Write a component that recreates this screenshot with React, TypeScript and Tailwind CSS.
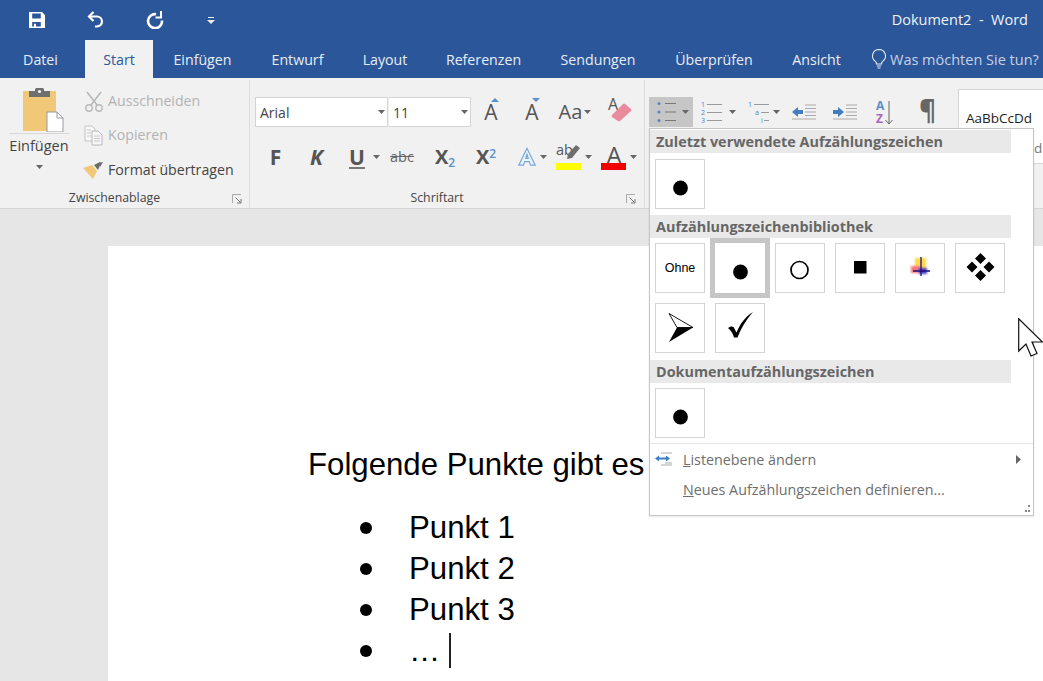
import React from "react";

const ui = "font-['Open_Sans','Noto_Sans',sans-serif]";

function Caret({ className = "" }: { className?: string }) {
  return (
    <svg width="7" height="4" viewBox="0 0 7 4" className={"shrink-0 " + className}>
      <path d="M0 0h7L3.5 4z" fill="#666" />
    </svg>
  );
}

function Launcher() {
  return (
    <svg width="10" height="10" viewBox="0 0 10 10">
      <path d="M.5 9V.5H9" fill="none" stroke="#aaa" />
      <path d="M3.5 3.5l5 5M9 5v4H5" fill="none" stroke="#777" />
    </svg>
  );
}

function Tile({ children, selected = false }: { children?: React.ReactNode; selected?: boolean }) {
  return (
    <div
      className={
        "w-[50px] h-[50px] bg-white flex items-center justify-center " +
        (selected ? "ring-[5px] ring-[#c6c6c6]" : "border border-[#d4d4d4]")
      }
    >
      {children}
    </div>
  );
}

function TileSvg({ children }: { children: React.ReactNode }) {
  return (
    <svg width="50" height="50" viewBox="0 0 50 50" className="shrink-0">
      {children}
    </svg>
  );
}

function MenuHeader({ children }: { children: React.ReactNode }) {
  return (
    <div className="w-[361px] h-[23px] bg-[#e9e9e9] pl-[6px] text-[#666] font-bold text-[14.4px] leading-[23px] whitespace-nowrap">
      {children}
    </div>
  );
}

function Dot() {
  return (
    <TileSvg>
      <circle cx="25.5" cy="29" r="7.4" fill="#000" />
    </TileSvg>
  );
}

function Tab({ label, w, ml = 0, active = false }: { label: string; w: number; ml?: number; active?: boolean }) {
  return (
    <div
      style={{ width: w, marginLeft: ml }}
      className={
        "h-full flex items-center justify-center text-[14.2px] shrink-0 pt-[1px] " +
        (active ? "bg-[#f1f1f1] text-[#2b579a]" : "text-[#e8edf5]")
      }
    >
      {label}
    </div>
  );
}

export default function App() {
  return (
    <div className={"relative w-[1043px] h-[681px] overflow-hidden bg-[#e6e6e6] " + ui}>
      {/* Title bar */}
      <div className="h-10 bg-[#2b579a] flex items-center text-white pl-[29px] pr-[15px]">
        <svg width="16" height="16" viewBox="0 0 16 16" className="mr-[42px]">
          <path
            fillRule="evenodd"
            d="M0 0h13l3 3v13H0zM3.2 1.5v5h8.6v-5zM3.2 10v4.6h1.8V11.8h2V14.6h4.8V10z"
            fill="#fff"
          />
        </svg>
        <svg width="18" height="18" viewBox="0 0 18 18" className="mr-[41px]">
          <path d="M2.5 5.5H10a5 5 0 0 1 0 10H8" fill="none" stroke="#fff" strokeWidth="2.2" />
          <path d="M6.5 1L2 5.5 6.5 10" fill="none" stroke="#fff" strokeWidth="2.2" />
        </svg>
        <svg width="18" height="18" viewBox="0 0 18 18" className="mr-[43px]">
          <path d="M10 3.2A7 7 0 1 0 16 9.5" fill="none" stroke="#fff" strokeWidth="2.6" />
          <path d="M15 0V6.5H9.5" fill="none" stroke="#fff" strokeWidth="2" />
        </svg>
        <svg width="8" height="7" viewBox="0 0 8 7">
          <path d="M1 0h6v1H1zM0 3h8L4 7z" fill="#e8edf5" />
        </svg>
        <div className="ml-auto text-[14.5px] text-[#f0f3f8] whitespace-pre">Dokument2  -  Word</div>
      </div>

      {/* Tabs */}
      <div className="h-[38px] bg-[#2b579a] flex items-center overflow-hidden">
        <Tab label="Datei" w={81} />
        <Tab label="Start" w={68} ml={4} active />
        <Tab label="Einfügen" w={99} />
        <Tab label="Entwurf" w={91} />
        <Tab label="Layout" w={84} />
        <Tab label="Referenzen" w={113} />
        <Tab label="Sendungen" w={116} />
        <Tab label="Überprüfen" w={116} />
        <Tab label="Ansicht" w={89} />
        <div className="flex items-center ml-[9px] shrink-0 text-[#c6d1e4] text-[14.5px] whitespace-nowrap mt-[2px]">
          <svg width="18" height="22" viewBox="0 0 18 22" className="mr-[2px] mt-[-3px] shrink-0">
            <path
              d="M9 1.5a6.5 6.5 0 0 0-3.6 11.9c.8.7 1.1 1.6 1.1 2.6h5c0-1 .3-1.9 1.1-2.6A6.5 6.5 0 0 0 9 1.5zM6.8 18h4.4M7.6 20h2.8"
              fill="none"
              stroke="#e8edf5"
              strokeWidth="1.1"
            />
          </svg>
          Was möchten Sie tun?
        </div>
      </div>

      {/* Ribbon */}
      <div className="h-[131px] bg-[#f1f1f1] border-b border-[#d6d6d6] flex text-[#444] overflow-hidden">
        {/* Zwischenablage */}
        <div className="w-[250px] shrink-0 flex flex-col pt-[2px] pb-[2px]">
          <div className="flex-1 border-r border-[#dcdcdc] flex flex-col">
            <div className="flex h-[108px]">
              <div className="w-[68px] ml-[5px] flex flex-col items-center pt-[8px] shrink-0">
                <svg width="42" height="44" viewBox="0 0 42 44" className="ml-[7px] shrink-0">
                  <path d="M1 3h33v40H1z" fill="#f0c878" />
                  <path d="M7 3h6V1.5C13 .5 14 0 15 0h5c1 0 2 .5 2 1.5V3h6v6H7z" fill="#6f6f6f" />
                  <circle cx="17.5" cy="3.5" r="1.6" fill="#f1f1f1" />
                  <path d="M25 24h10l6 6v14H25z" fill="#fff" stroke="#9a9a9a" />
                  <path d="M35 24v6h6" fill="none" stroke="#9a9a9a" />
                </svg>
                <div className="w-[60px] border-t border-[#d8d8d8] mt-[1px]" />
                <div className="text-[14.5px] leading-[20px] mt-[2px]">Einfügen</div>
                <Caret className="mt-[9px]" />
              </div>
              <div className="flex flex-col text-[14.2px] ml-[11px] w-[165px] shrink-0 pt-[4px]">
                <div className="h-[34px] flex items-center text-[#b3b3b3]">
                  <svg width="20" height="21" viewBox="0 0 20 21" className="mr-[4px] shrink-0">
                    <path d="M3 1l10 13M17 1L7 14" stroke="#b8b8b8" strokeWidth="1.6" fill="none" />
                    <circle cx="5" cy="17" r="3.2" fill="none" stroke="#b8b8b8" strokeWidth="1.4" />
                    <circle cx="15" cy="17" r="3.2" fill="none" stroke="#b8b8b8" strokeWidth="1.4" />
                  </svg>
                  Ausschneiden
                </div>
                <div className="h-[34px] flex items-center text-[#b3b3b3]">
                  <svg width="20" height="21" viewBox="0 0 20 21" className="mr-[4px] shrink-0">
                    <path d="M1 1h7l3 3v12H1z" fill="#f7f7f7" stroke="#c4c4c4" />
                    <path d="M8 6h6l4 4v10H8z" fill="#f7f7f7" stroke="#b8b8b8" />
                    <path d="M3 5h4M3 8h4M3 11h4M10 11h6M10 13.5h6M10 16h6" stroke="#c8c8c8" />
                  </svg>
                  Kopieren
                </div>
                <div className="h-[34px] flex items-center mt-[1px]">
                  <svg width="21" height="17" viewBox="0 0 21 17" className="mr-[4px] -ml-[1px] shrink-0">
                    <path d="M0 6l9-3 5 6-4 8z" fill="#f0c878" />
                    <path d="M11 3l6-3 1 1-3 7z" fill="#6a6a6a" />
                    <path d="M16 1l4-1-3 5z" fill="#6a6a6a" />
                  </svg>
                  Format übertragen
                </div>
              </div>
            </div>
            <div className="relative h-[20px] flex items-center justify-center text-[12.3px] mr-[20px]">
              Zwischenablage
              <div className="absolute right-[-13px] top-[6px]">
                <Launcher />
              </div>
            </div>
          </div>
        </div>

        {/* Schriftart */}
        <div className="w-[395px] shrink-0 flex flex-col pt-[2px] pb-[2px]">
          <div className="flex-1 border-r border-[#dcdcdc] flex flex-col">
            <div className="h-[108px] flex flex-col pl-[5px] pt-[17px]">
              <div className="flex items-center h-[30px]">
                <div className="w-[133px] h-[30px] bg-white border border-[#d4d4d4] flex items-center justify-between pl-[4px] pr-[2px] text-[14px]">
                  <span>Arial</span>
                  <Caret />
                </div>
                <div className="w-[82px] h-[30px] bg-white border border-[#d4d4d4] border-l-0 flex items-center justify-between pl-[4px] pr-[2px] text-[14px] ml-[1px]">
                  <span>11</span>
                  <Caret />
                </div>
                <div className="w-[40px] text-[21px] leading-none flex justify-center relative text-[#555]">
                  A
                  <svg width="8" height="4" viewBox="0 0 8 4" className="absolute left-[20px] top-[-4px]">
                    <path d="M0 4h8L4 0z" fill="#5b8fc7" />
                  </svg>
                </div>
                <div className="w-[42px] text-[21px] leading-none flex justify-center relative text-[#555]">
                  A
                  <svg width="8" height="4" viewBox="0 0 8 4" className="absolute left-[21px] top-[-4px]">
                    <path d="M0 0h8L4 4z" fill="#5b8fc7" />
                  </svg>
                </div>
                <div className="w-[44px] text-[20px] leading-none flex items-center justify-center text-[#555]">
                  Aa
                  <Caret className="ml-[2px]" />
                </div>
                <div className="relative w-[24px] h-[26px] ml-[11px] mt-[-6px] shrink-0">
                  <span className="absolute left-0 top-[-2px] text-[16px] leading-[20px] text-[#555]">A</span>
                  <svg width="24" height="26" viewBox="0 0 24 26" className="absolute left-0 top-0">
                    <path d="M4 19L15 8a1.5 1.5 0 0 1 2 0l6 5a1.5 1.5 0 0 1 0 2L12 25a1.5 1.5 0 0 1-2 0l-6-4a1.5 1.5 0 0 1 0-2z" fill="#e98b9c" />
                  </svg>
                </div>
              </div>
              <div className="flex items-center h-[30px] mt-[15px] text-[#555]">
                <div className="w-[41px] flex justify-center font-bold text-[21px] leading-none">F</div>
                <div className="w-[41px] flex justify-center font-bold italic text-[21px] leading-none">K</div>
                <div className="w-[30px] flex justify-center font-bold text-[21px] leading-none underline underline-offset-2 decoration-[#777] ml-[5px]">U</div>
                <Caret className="ml-[1px]" />
                <div className="w-[46px] text-center text-[14.5px] line-through leading-none -ml-[1px] text-[#666]">abc</div>
                <div className="w-[36px] text-center font-bold text-[20px] leading-none ml-[2px] whitespace-nowrap">
                  X<sub className="text-[#5b8fc7] text-[12px] font-semibold">2</sub>
                </div>
                <div className="w-[36px] text-center font-bold text-[20px] leading-none ml-[5px] whitespace-nowrap">
                  X<sup className="text-[#5b8fc7] text-[12px] font-semibold">2</sup>
                </div>
                <svg width="20" height="22" viewBox="0 0 22 22" className="ml-[13px] shrink-0">
                  <path d="M11 1.5L2 20h5l1.5-4h5l1.5 4h5zM9.6 12.5L11 8l1.4 4.5z" fill="#eaf2fb" stroke="#7aa7d7" strokeWidth="1.3" />
                </svg>
                <Caret className="ml-[3px]" />
                <div className="relative w-[26px] h-[24px] ml-[9px] shrink-0">
                  <span className="absolute left-0 top-[-2px] text-[14.5px] leading-none text-[#555]">ab</span>
                  <svg width="16" height="16" viewBox="0 0 16 16" className="absolute left-[8px] top-[0px]">
                    <path d="M12 0l4 3-8 10-5 1 1-5z" fill="#6e6e6e" />
                  </svg>
                  <div className="absolute left-0 bottom-[-1px] w-[25px] h-[7px] bg-[#ffff00]" />
                </div>
                <Caret className="ml-[3px]" />
                <div className="relative w-[26px] h-[24px] ml-[9px] flex justify-center shrink-0">
                  <span className="text-[24px] leading-[19px] text-[#555]">A</span>
                  <div className="absolute left-0 bottom-[-1px] w-[25px] h-[7px] bg-[#f00000]" />
                </div>
                <Caret className="ml-[3px]" />
              </div>
            </div>
            <div className="relative h-[20px] flex items-center justify-center text-[12.3px] mr-[20px]">
              Schriftart
              <div className="absolute right-[-12px] top-[6px]">
                <Launcher />
              </div>
            </div>
          </div>
        </div>

        {/* Absatz */}
        <div className="flex-1 flex items-start min-w-0">
          <div className="w-[313px] shrink-0 pl-[4px] pt-[19px]">
            <div className="flex items-center h-[30px]">
              <div className="w-[44px] h-[30px] bg-[#c6c6c6] flex items-center pl-[8px] shrink-0">
                <svg width="20" height="24" viewBox="0 0 20 24" className="shrink-0">
                  <circle cx="2" cy="3.5" r="1.5" fill="#4a86c5" />
                  <circle cx="2" cy="12" r="1.5" fill="#4a86c5" />
                  <circle cx="2" cy="20.5" r="1.5" fill="#4a86c5" />
                  <path d="M8 3.5h11M8 12h11M8 20.5h11" stroke="#777" fill="none" />
                </svg>
                <Caret className="ml-[5px]" />
              </div>
              <div className="flex items-center ml-[8px] shrink-0">
                <svg width="22" height="24" viewBox="0 0 22 24" className="shrink-0">
                  <text x="0" y="7" fontSize="7" fill="#4a86c5" fontFamily="Open Sans">1</text>
                  <text x="0" y="15" fontSize="7" fill="#4a86c5" fontFamily="Open Sans">2</text>
                  <text x="0" y="23" fontSize="7" fill="#4a86c5" fontFamily="Open Sans">3</text>
                  <path d="M6 4.5h15M6 12.5h15M6 20.5h15" stroke="#999" fill="none" />
                </svg>
                <Caret className="ml-[6px]" />
              </div>
              <div className="flex items-center ml-[12px] shrink-0">
                <svg width="25" height="24" viewBox="0 0 25 24" className="shrink-0">
                  <text x="0" y="7" fontSize="7" fill="#4a86c5" fontFamily="Open Sans">1</text>
                  <text x="7" y="15" fontSize="7" fill="#4a86c5" fontFamily="Open Sans">a</text>
                  <text x="13" y="23" fontSize="7" fill="#4a86c5" fontFamily="Open Sans">i</text>
                  <path d="M6 4.5h15M13 12.5h8M16 20.5h5" stroke="#999" fill="none" />
                </svg>
                <Caret />
              </div>
              <svg width="24" height="16" viewBox="0 0 24 16" className="ml-[12px] shrink-0">
                <path d="M0 8l6-5v3h5v4H6v3z" fill="#3f7fc0" />
                <path d="M13 1h11M13 4.5h11M13 8h11M13 11.5h11M0 15h24" stroke="#aaa" fill="none" />
              </svg>
              <svg width="24" height="16" viewBox="0 0 24 16" className="ml-[17px] shrink-0">
                <path d="M11 8L5 3v3H0v4h5v3z" fill="#3f7fc0" />
                <path d="M13 1h11M13 4.5h11M13 8h11M13 11.5h11M0 15h24" stroke="#aaa" fill="none" />
              </svg>
              <div className="w-[20px] ml-[19px] flex items-end shrink-0 h-[26px]">
                <div className="flex flex-col text-[12px] leading-[13px] font-bold">
                  <span className="text-[#5b8fc7]">A</span>
                  <span className="text-[#a56ac0]">Z</span>
                </div>
                <svg width="8" height="24" viewBox="0 0 8 24" className="ml-[1px] shrink-0">
                  <path d="M4 0v23M.5 19L4 23l3.5-4" fill="none" stroke="#666" />
                </svg>
              </div>
              <div className="ml-[23px] -mt-[5px] text-[26px] font-bold text-[#666] leading-none shrink-0 w-[20px]">¶</div>
            </div>
          </div>
          <div className="mt-[11px] w-[90px] h-[75px] bg-white border border-[#d6d6d6] shrink-0 text-[13.5px] whitespace-nowrap overflow-hidden">
            <div className="pl-[7px] pt-[18px] leading-[20px] text-[#222]">AaBbCcDd</div>
            <div className="pl-[75px] mt-[10px] leading-[20px] text-[#777]">d</div>
          </div>
        </div>
      </div>

      {/* Document */}
      <div className="ml-[108px] mt-[37px] h-[500px] bg-white pl-[200px] pt-[198px] font-['Liberation_Sans',Arial,sans-serif] text-[31.2px] text-black leading-[41px]">
        <div className="h-[41px] whitespace-nowrap">Folgende Punkte gibt es</div>
        <ul className="mt-[22px] ml-[51px]">
          {["Punkt 1", "Punkt 2", "Punkt 3"].map((t) => (
            <li key={t} className="h-[41px] flex items-center">
              <span className="w-[14px] h-[14px] shrink-0 flex items-center justify-center">
                <span className="w-[12px] h-[12px] rounded-full bg-black block" />
              </span>
              <span className="ml-[36px]">{t}</span>
            </li>
          ))}
          <li className="h-[41px] flex items-center">
            <span className="w-[14px] h-[14px] shrink-0 flex items-center justify-center">
              <span className="w-[12px] h-[12px] rounded-full bg-black block" />
            </span>
            <span className="ml-[36px]">…</span>
            <span className="w-[1.5px] h-[35px] bg-[#222] ml-[9px]" />
          </li>
        </ul>
      </div>

      {/* Bullets menu */}
      <div className="absolute left-[649px] top-[128px] w-[385px] h-[388px] bg-white border border-[#c6c6c6] pt-[1px] shadow-[0_1px_2px_rgba(0,0,0,0.1)]">
        <MenuHeader>Zuletzt verwendete Aufzählungszeichen</MenuHeader>
        <div className="mt-[6px] pl-[5px]">
          <Tile>
            <Dot />
          </Tile>
        </div>
        <div className="mt-[6px]">
          <MenuHeader>Aufzählungszeichenbibliothek</MenuHeader>
        </div>
        <div className="mt-[5px] pl-[5px] flex flex-wrap gap-[10px] w-[365px]">
          <Tile>
            <span className="font-['Liberation_Sans',Arial,sans-serif] text-[12.5px] text-black">Ohne</span>
          </Tile>
          <Tile selected>
            <Dot />
          </Tile>
          <Tile>
            <TileSvg>
              <circle cx="24.5" cy="27" r="8.5" fill="none" stroke="#000" strokeWidth="1.7" />
            </TileSvg>
          </Tile>
          <Tile>
            <TileSvg>
              <rect x="19" y="18" width="12.5" height="12.5" fill="#000" />
            </TileSvg>
          </Tile>
          <Tile>
            <TileSvg>
              <g className="blur-[0.8px]">
                <rect x="20" y="15" width="11" height="10" fill="#ffd84a" />
                <rect x="16" y="23" width="9" height="7" fill="#f4757a" />
                <rect x="24" y="25" width="8" height="6" fill="#4a3ac0" />
              </g>
              <path d="M26 14v19M18 28h17" stroke="#1a1080" strokeWidth="1.3" />
            </TileSvg>
          </Tile>
          <Tile>
            <TileSvg>
              <path d="M25.5 10l5.5 5.5-5.5 5.5-5.5-5.5zM25.5 27l5.5 5.5-5.5 5.5-5.5-5.5zM17 18.5l5.5 5.5-5.5 5.5L11.5 24zM34 18.5l5.5 5.5-5.5 5.5L28.5 24z" fill="#000" />
            </TileSvg>
          </Tile>
          <Tile>
            <TileSvg>
              <path d="M14 10.5L38 24.5H22z" fill="#fff" stroke="#000" strokeWidth="0.9" />
              <path d="M14 39l8-14.5H38z" fill="#000" />
            </TileSvg>
          </Tile>
          <Tile>
            <TileSvg>
              <path d="M13 25c2-1.5 4-2 5.5-1l3 5.5C25 21 30 14 38 9 31 17 26 25 22.5 34.5h-3.5c-1-4-3-7-6-9.5z" fill="#000" />
            </TileSvg>
          </Tile>
        </div>
        <div className="mt-[7px]">
          <MenuHeader>Dokumentaufzählungszeichen</MenuHeader>
        </div>
        <div className="mt-[5px] pl-[5px]">
          <Tile>
            <Dot />
          </Tile>
        </div>
        <div className="mt-[5px] border-t border-[#e6e6e6] text-[14.3px] text-[#6e6e6e] pt-[1px]">
          <div className="h-[30px] flex items-center pl-[5px] pr-[12px]">
            <svg width="18" height="14" viewBox="0 0 18 14" className="shrink-0 -mt-[2px]">
              <path d="M6 1h11M10 11h7M6 13h11" stroke="#aaa" fill="none" />
              <path d="M0 6.5l4-3v2h7v-2l4 3-4 3v-2H4v2z" fill="#3f7fc0" />
            </svg>
            <span className="ml-[10px]">
              <span className="underline">L</span>istenebene ändern
            </span>
            <svg width="5" height="9" viewBox="0 0 5 9" className="ml-auto shrink-0 -mt-[2px]">
              <path d="M0 0l5 4.5L0 9z" fill="#666" />
            </svg>
          </div>
          <div className="h-[30px] flex items-center pl-[33px]">
            <span>
              <span className="underline">N</span>eues Aufzählungszeichen definieren...
            </span>
          </div>
        </div>
        <svg width="8" height="8" viewBox="0 0 8 8" className="absolute right-[2px] bottom-[2px]">
          <path d="M5 0h2v2H5zM2 5h2v2H2zM5 5h2v2H5z" fill="#888" />
        </svg>
      </div>

      {/* Mouse pointer */}
      <svg width="26" height="40" viewBox="0 0 26 40" className="absolute left-[1018px] top-[318px]">
        <path d="M.7 .7V33l7.3-7 5 12 6-2.5-5-11.5h10.500z" fill="#fff" stroke="#111" strokeWidth="1.2" />
      </svg>
    </div>
  );
}
